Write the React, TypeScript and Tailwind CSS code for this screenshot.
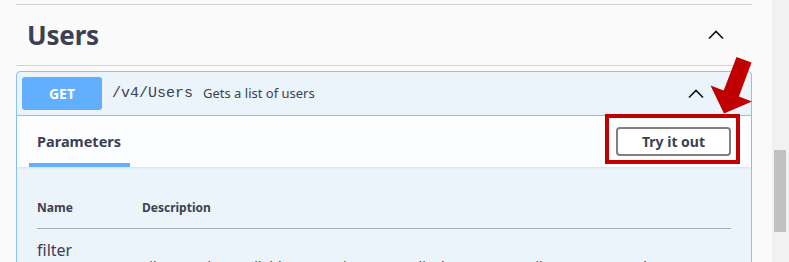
import React from 'react';

const Chevron: React.FC<{ className?: string }> = ({ className }) => (
  <svg className={className} width="20" height="20" viewBox="0 0 20 20">
    <polyline points="3,13.5 10,6.5 17,13.5" fill="none" stroke="#111" strokeWidth="1.6" />
  </svg>
);

const App: React.FC = () => {
  const sans = { fontFamily: '"Noto Sans", "Open Sans", sans-serif' };

  return (
    <div className="relative flex h-[262px] w-[789px] overflow-hidden bg-[#fafafa] text-[#3b4151]" style={sans}>
      <div className="flex-1 pl-4 pr-5">
        <div className="mt-1 flex h-[62px] items-center justify-between border-y border-[#d3d3d3] pl-[11px] pr-[26px]">
          <h2 className="text-[26px] font-bold leading-none tracking-[-0.2px]">Users</h2>
          <Chevron />
        </div>

        <div className="mt-[5px] rounded-[4px] border border-[#8cc1f5] bg-[#ebf3fb]">
          <div className="flex items-center border-b border-[#8cc1f5] p-[5px]">
            <div className="flex h-[33px] w-[80px] items-center justify-center rounded-[3px] bg-[#61affe] text-[14px] font-bold text-white">
              GET
            </div>
            <span className="ml-[10px] text-[15px] leading-none" style={{ fontFamily: '"Liberation Mono", monospace' }}>/v4/Users</span>
            <span className="ml-[10px] text-[13px] leading-none">Gets a list of users</span>
            <Chevron className="ml-auto mr-[40px]" />
          </div>

          <div className="flex h-[51px] items-stretch justify-between bg-white/80 pl-[12px] pr-[20px] shadow-[0_1px_2px_rgba(0,0,0,0.08)]">
            <div className="flex w-[101px] items-center border-b-4 border-[#61affe] px-2 pt-1 text-[14.5px] font-bold">Parameters</div>
            <div className="flex items-center">
              <button className="h-[29px] w-[115px] rounded-[4px] border-2 border-[#808080] bg-white text-[14px] font-bold">Try it out</button>
            </div>
          </div>

          <div className="px-[20px] pt-[33px]">
            <div className="flex border-b border-[#3b4151]/40 pb-[12px] text-[12px] font-bold leading-[16px]">
              <div className="w-[105px]">Name</div>
              <div>Description</div>
            </div>
            <div className="flex pt-[9px]">
              <div className="w-[105px] text-[16px] leading-[24px]">filter</div>
              <div className="whitespace-nowrap pt-[19px] text-[14px] leading-[20px]">Filter results. Available properties: name, displayName, email, status, createdAt</div>
            </div>
          </div>
        </div>
      </div>

      <div className="w-[17px] bg-[#f1f1f1] pl-[2px] pt-[150px]">
        <div className="h-[82px] w-[12px] bg-[#c1c1c1]" />
      </div>

      <div className="pointer-events-none absolute left-[605px] top-[114px] h-[50px] w-[135px] border-4 border-[#c00000]" />
      <svg className="pointer-events-none absolute left-[700px] top-[50px]" width="60" height="70" viewBox="0 0 60 70">
        <polygon
          points="36.5,7 51.5,12.5 38.9,46.5 52,51.5 24,63.5 10.5,35.5 23.7,40.5"
          fill="#c00000"
        />
      </svg>
    </div>
  );
};

export default App;
